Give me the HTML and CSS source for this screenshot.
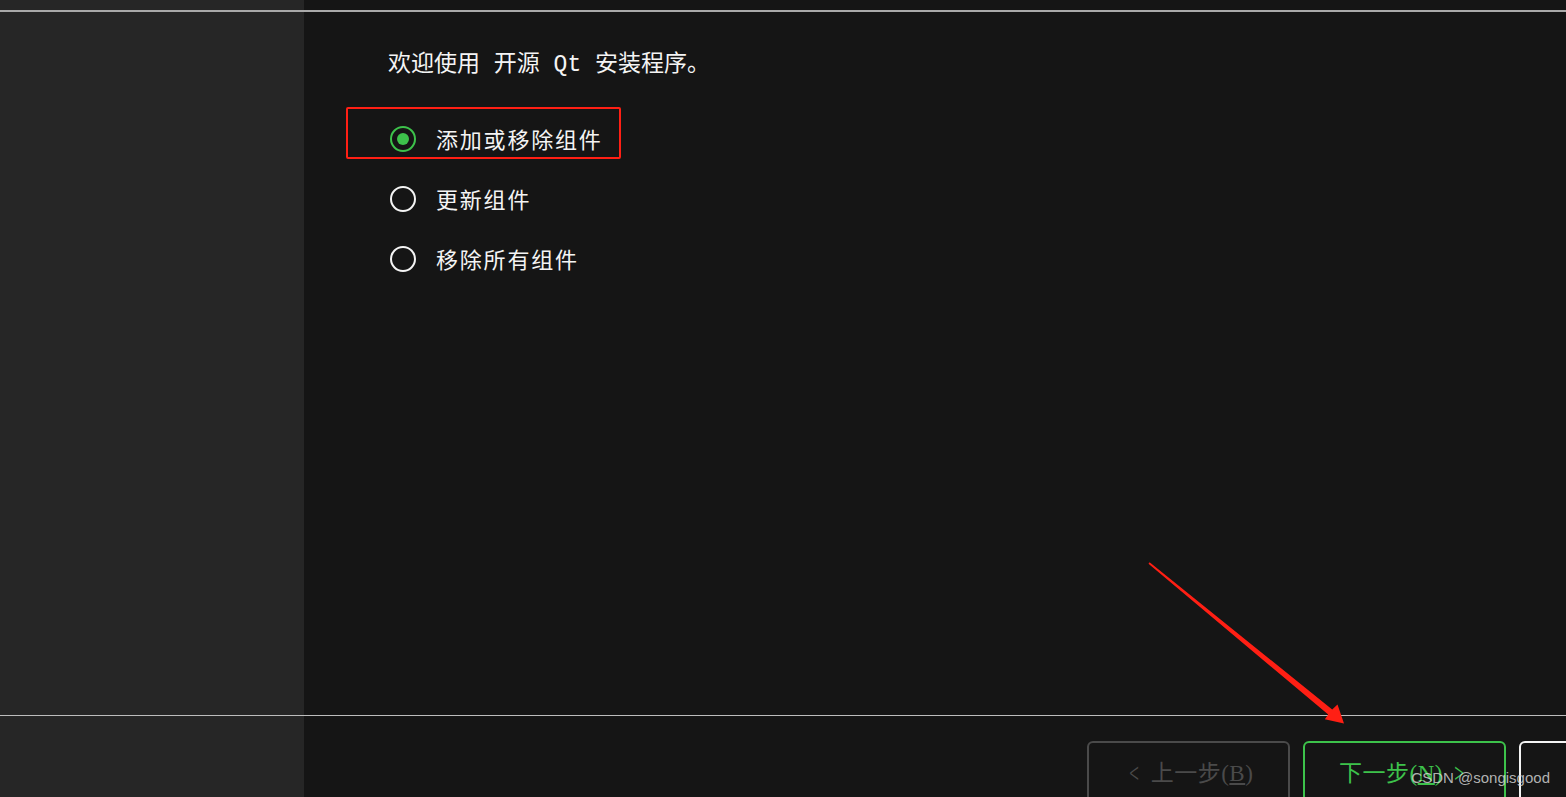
FILE: index.html
```html
<!DOCTYPE html>
<html lang="zh-CN">
<head>
    <meta charset="UTF-8">
    <meta name="viewport" content="width=device-width, initial-scale=1.0">
    <title>Qt 维护工具</title>
    <link rel="stylesheet" href="styles.css">
</head>
<body>
    <div class="installer">
        <div class="band band-top">
            <div class="side"></div>
            <div class="fill"></div>
        </div>
        <div class="rule rule-top"></div>

        <div class="band band-main">
            <div class="side"></div>
            <div class="page">
                <p class="welcome">欢迎使用 开源 Qt 安装程序。</p>
                <div class="choices">
                    <label class="choice">
                        <span class="radio checked"></span>
                        <span class="choice-text">添加或移除组件</span>
                        <span class="mark-box"></span>
                    </label>
                    <label class="choice">
                        <span class="radio"></span>
                        <span class="choice-text">更新组件</span>
                    </label>
                    <label class="choice">
                        <span class="radio"></span>
                        <span class="choice-text">移除所有组件</span>
                    </label>
                </div>
            </div>
        </div>

        <div class="rule rule-bottom"></div>

        <div class="band band-foot">
            <div class="side"></div>
            <div class="buttons">
                <button class="wizard-btn disabled"><span class="chev">&lt;</span> 上一步(<u>B</u>)</button>
                <button class="wizard-btn primary">下一步(<u>N</u>) <span class="chev">&gt;</span></button>
                <button class="wizard-btn plain"></button>
            </div>
        </div>

        <svg class="arrow" width="1566" height="797" viewBox="0 0 1566 797">
            <polygon fill="#ff1f14" points="1148.5,563.8 1149.6,562.3 1332.2,709.4 1337.5,704.5 1344,723.5 1324.8,719.3 1328.2,714.6"/>
        </svg>
        <div class="watermark">CSDN @songisgood</div>
    </div>
</body>
</html>
```

FILE: styles.css
```css
:root {
    --side: #262626;
    --bg: #151515;
    --rule: #a9a9a9;
    --green: #3dc24b;
    --red: #ff1f14;
    --dim: #4a4a4a;
}

* {
    box-sizing: border-box;
}

body {
    margin: 0;
    background: var(--bg);
    color: #f4f4f4;
    font-family: "Liberation Mono", "Noto Sans CJK SC", monospace;
    overflow: hidden;
}

.installer {
    position: relative;
    width: 1566px;
    height: 797px;
    display: flex;
    flex-direction: column;
    overflow: hidden;
}

.band {
    display: flex;
    flex-shrink: 0;
}

.side {
    width: 304px;
    flex-shrink: 0;
    background: var(--side);
}

.band-top {
    height: 10px;
}

.rule {
    background: var(--rule);
    flex-shrink: 0;
}

.rule-top {
    height: 2px;
}

.rule-bottom {
    height: 1px;
    background: #bdbdbd;
}

.band-main {
    height: 703px;
}

.page {
    flex: 1;
    padding: 38px 0 0 84px;
}

.welcome {
    margin: 0;
    font-size: 23px;
    line-height: 30px;
}

.choices {
    margin-top: 29px;
    display: flex;
    flex-direction: column;
}

.choice {
    position: relative;
    height: 60px;
    display: flex;
    align-items: center;
    gap: 20px;
    align-self: flex-start;
    font-family: "Noto Sans CJK SC", sans-serif;
    font-size: 22px;
    letter-spacing: 1.8px;
}

.radio {
    width: 26px;
    height: 26px;
    margin-left: 2px;
    border: 2.5px solid #f4f4f4;
    border-radius: 50%;
    display: flex;
    align-items: center;
    justify-content: center;
}

.radio.checked {
    border-color: var(--green);
}

.radio.checked::after {
    content: "";
    width: 12px;
    height: 12px;
    border-radius: 50%;
    background: var(--green);
}

.choice-text {
    line-height: 30px;
    padding-bottom: 2px;
}

.mark-box {
    position: absolute;
    left: -42px;
    top: -2px;
    width: 275px;
    height: 52px;
    border: 2px solid var(--red);
    border-radius: 2px;
}

.band-foot {
    flex: 1;
    min-height: 0;
}

.buttons {
    flex: 1;
    display: flex;
    gap: 13px;
    padding: 25px 0 0 783px;
}

.wizard-btn {
    width: 203px;
    height: 62px;
    flex-shrink: 0;
    background: transparent;
    border: 2px solid var(--dim);
    border-radius: 6px;
    color: var(--dim);
    font-family: "Liberation Serif", "Noto Sans CJK SC", serif;
    font-size: 23px;
    letter-spacing: 0.5px;
    padding: 0 0 2px;
}

.wizard-btn u {
    text-underline-offset: 2px;
}

.wizard-btn.primary {
    border-color: var(--green);
    color: var(--green);
}

.wizard-btn.plain {
    border-color: #f4f4f4;
}

.chev {
    display: inline-block;
    font-family: "Noto Sans CJK SC", sans-serif;
    font-weight: 300;
    transform: scale(0.75, 1.4);
    margin: 0 4px;
}

.arrow {
    position: absolute;
    left: 0;
    top: 0;
    pointer-events: none;
}

.watermark {
    position: absolute;
    right: 16px;
    bottom: 11px;
    font-family: "Liberation Sans", sans-serif;
    font-size: 15px;
    color: rgba(220, 220, 220, 0.8);
}
```
